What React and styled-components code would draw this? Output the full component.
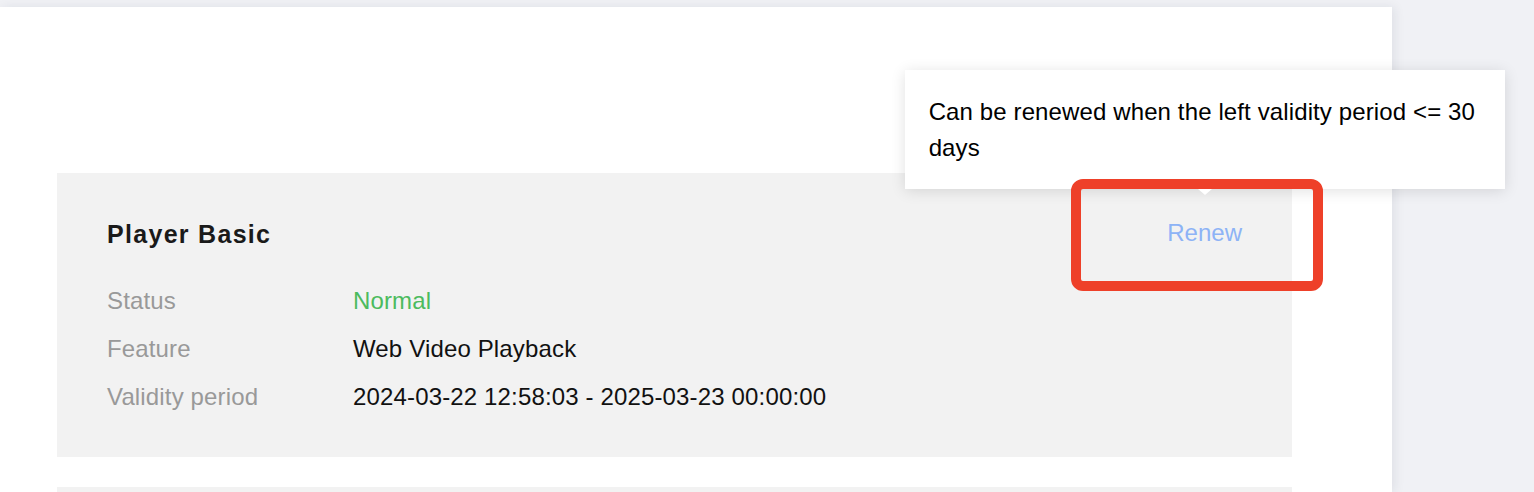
import React from 'react'
import styled, { createGlobalStyle } from 'styled-components'

const GlobalStyle = createGlobalStyle`
    body {
        margin: 0;
        background: #f0f1f5;
        font-family: 'Liberation Sans', Arial, Helvetica, sans-serif;
        overflow: hidden;
    }
`

const Page = styled.div`
    padding-top: 7px;
    height: 492px;
    box-sizing: border-box;
    display: flex;
    overflow: hidden;
`

const Panel = styled.div`
    width: 1392px;
    background: #ffffff;
    box-shadow: 3px 0 10px rgba(30, 35, 60, 0.08);
    padding: 166px 100px 0 57px;
    box-sizing: border-box;
`

const Card = styled.div`
    background: #f2f2f2;
    padding: 37px 50px 36px;
    margin-bottom: 30px;
    min-height: ${props => props.empty ? '40px' : 'auto'};
`

const Header = styled.div`
    display: flex;
    justify-content: space-between;
    align-items: center;
    height: 48px;
    margin-bottom: 19px;
`

const Title = styled.div`
    font-size: 25px;
    font-weight: 700;
    color: #1a1a1a;
    letter-spacing: 1.3px;
`

const RenewWrap = styled.div`
    position: relative;
    line-height: 48px;
`

const Renew = styled.a`
    font-size: 24px;
    color: #8db3f6;
    cursor: not-allowed;
`

const Tooltip = styled.div`
    position: absolute;
    bottom: 71px;
    left: 50%;
    transform: translateX(-50%);
    width: 600px;
    box-sizing: border-box;
    padding: 24px 16px 23px 24px;
    background: #ffffff;
    color: #000000;
    font-size: 24px;
    letter-spacing: 0.12px;
    line-height: 36px;
    box-shadow: 0 2px 14px rgba(0, 0, 0, 0.12);
    z-index: 2;

    &::after {
        content: '';
        position: absolute;
        left: 50%;
        bottom: -6px;
        margin-left: -7px;
        border-left: 7px solid transparent;
        border-right: 7px solid transparent;
        border-top: 6px solid #ffffff;
    }
`

const Highlight = styled.div`
    position: absolute;
    left: -96px;
    top: -30px;
    width: 252px;
    height: 112px;
    box-sizing: border-box;
    border: 10px solid #ee4029;
    border-radius: 12px;
    z-index: 3;
    pointer-events: none;
`

const Rows = styled.div`
    display: grid;
    grid-template-columns: 246px 1fr;
    font-size: 24px;
    letter-spacing: 0.15px;
    line-height: 48px;
`

const Label = styled.div`
    color: #999999;
`

const Value = styled.div`
    color: ${props => props.tone === 'ok' ? '#4cbb5e' : '#111111'};
`

const details = [
    { label: 'Status', value: 'Normal', tone: 'ok' },
    { label: 'Feature', value: 'Web Video Playback' },
    { label: 'Validity period', value: '2024-03-22 12:58:03 - 2025-03-23 00:00:00' },
]

export default function App() {
    return (
        <>
            <GlobalStyle />
            <Page>
                <Panel>
                    <Card>
                        <Header>
                            <Title>Player Basic</Title>
                            <RenewWrap>
                                <Tooltip>Can be renewed when the left validity period &lt;= 30 days</Tooltip>
                                <Renew>Renew</Renew>
                                <Highlight />
                            </RenewWrap>
                        </Header>
                        <Rows>
                            {details.map(d => (
                                <React.Fragment key={d.label}>
                                    <Label>{d.label}</Label>
                                    <Value tone={d.tone}>{d.value}</Value>
                                </React.Fragment>
                            ))}
                        </Rows>
                    </Card>
                    <Card empty />
                </Panel>
            </Page>
        </>
    )
}
